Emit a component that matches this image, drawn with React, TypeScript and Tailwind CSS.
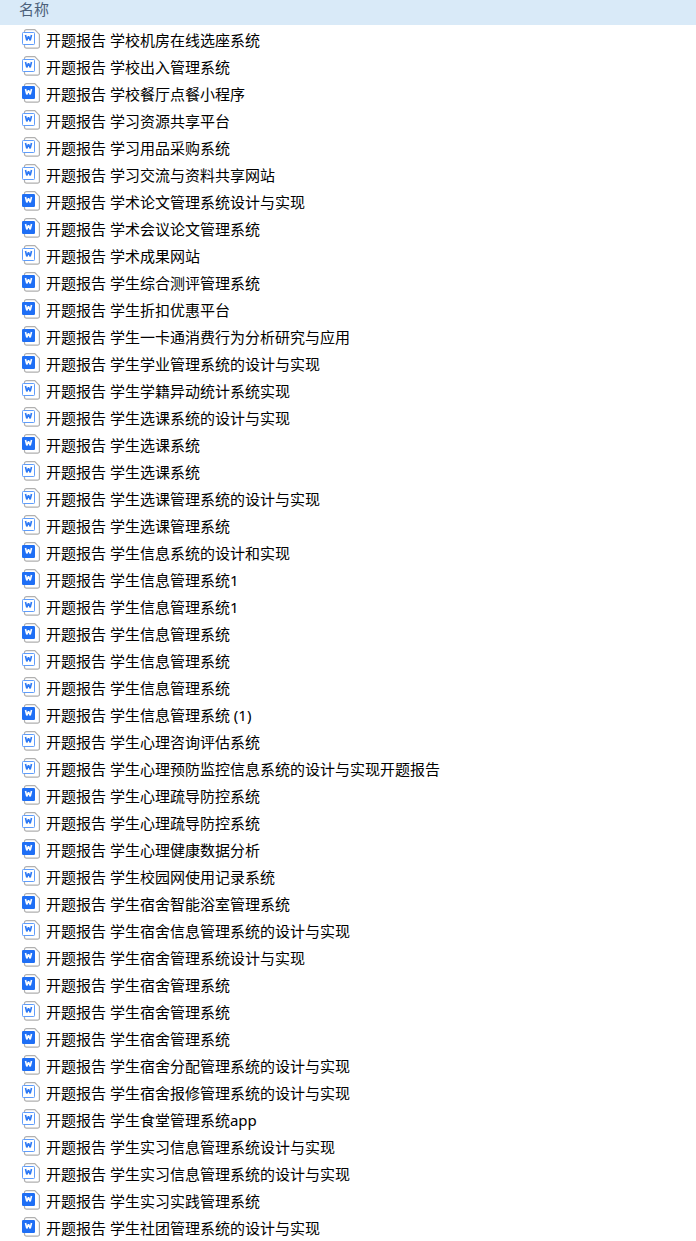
import React from "react";

type DocKind = "doc" | "docx";

type FileItem = {
  name: string;
  kind: DocKind;
};

const files: FileItem[] = [
  { name: "开题报告 学校机房在线选座系统", kind: "doc" },
  { name: "开题报告 学校出入管理系统", kind: "doc" },
  { name: "开题报告 学校餐厅点餐小程序", kind: "docx" },
  { name: "开题报告 学习资源共享平台", kind: "doc" },
  { name: "开题报告 学习用品采购系统", kind: "doc" },
  { name: "开题报告 学习交流与资料共享网站", kind: "doc" },
  { name: "开题报告 学术论文管理系统设计与实现", kind: "docx" },
  { name: "开题报告 学术会议论文管理系统", kind: "docx" },
  { name: "开题报告 学术成果网站", kind: "doc" },
  { name: "开题报告 学生综合测评管理系统", kind: "docx" },
  { name: "开题报告 学生折扣优惠平台", kind: "docx" },
  { name: "开题报告 学生一卡通消费行为分析研究与应用", kind: "docx" },
  { name: "开题报告 学生学业管理系统的设计与实现", kind: "docx" },
  { name: "开题报告 学生学籍异动统计系统实现", kind: "doc" },
  { name: "开题报告 学生选课系统的设计与实现", kind: "doc" },
  { name: "开题报告 学生选课系统", kind: "docx" },
  { name: "开题报告 学生选课系统", kind: "doc" },
  { name: "开题报告 学生选课管理系统的设计与实现", kind: "doc" },
  { name: "开题报告 学生选课管理系统", kind: "doc" },
  { name: "开题报告 学生信息系统的设计和实现", kind: "docx" },
  { name: "开题报告 学生信息管理系统1", kind: "docx" },
  { name: "开题报告 学生信息管理系统1", kind: "doc" },
  { name: "开题报告 学生信息管理系统", kind: "docx" },
  { name: "开题报告 学生信息管理系统", kind: "doc" },
  { name: "开题报告 学生信息管理系统", kind: "doc" },
  { name: "开题报告 学生信息管理系统 (1)", kind: "docx" },
  { name: "开题报告 学生心理咨询评估系统", kind: "doc" },
  { name: "开题报告 学生心理预防监控信息系统的设计与实现开题报告", kind: "doc" },
  { name: "开题报告 学生心理疏导防控系统", kind: "docx" },
  { name: "开题报告 学生心理疏导防控系统", kind: "doc" },
  { name: "开题报告 学生心理健康数据分析", kind: "docx" },
  { name: "开题报告 学生校园网使用记录系统", kind: "doc" },
  { name: "开题报告 学生宿舍智能浴室管理系统", kind: "docx" },
  { name: "开题报告 学生宿舍信息管理系统的设计与实现", kind: "doc" },
  { name: "开题报告 学生宿舍管理系统设计与实现", kind: "docx" },
  { name: "开题报告 学生宿舍管理系统", kind: "docx" },
  { name: "开题报告 学生宿舍管理系统", kind: "doc" },
  { name: "开题报告 学生宿舍管理系统", kind: "docx" },
  { name: "开题报告 学生宿舍分配管理系统的设计与实现", kind: "docx" },
  { name: "开题报告 学生宿舍报修管理系统的设计与实现", kind: "doc" },
  { name: "开题报告 学生食堂管理系统app", kind: "doc" },
  { name: "开题报告 学生实习信息管理系统设计与实现", kind: "doc" },
  { name: "开题报告 学生实习信息管理系统的设计与实现", kind: "doc" },
  { name: "开题报告 学生实习实践管理系统", kind: "docx" },
  { name: "开题报告 学生社团管理系统的设计与实现", kind: "docx" },
];

const DocIcon: React.FC<{ kind: DocKind }> = ({ kind }) => {
  const filled = kind === "docx";

  return (
    <svg
      viewBox="0 0 18 20"
      className="w-[18px] h-5 mt-0.5 shrink-0"
      fill="none"
      aria-hidden="true"
    >
      {/* Sheet with the cut corner */}
      <path
        d="M4.5 0.6H12.8L17.4 5.4V17.4a1.8 1.8 0 0 1-1.8 1.8H4.5a2 2 0 0 1-2-2V2.6a2 2 0 0 1 2-2z"
        fill="#fff"
        stroke="#b0b0b0"
        strokeWidth="1.2"
      />
      {/* Badge */}
      {filled ? (
        <rect x="0" y="3" width="13" height="13" rx="1.2" fill="#1f6ff5" />
      ) : (
        <rect
          x="0.5"
          y="3.5"
          width="12"
          height="12"
          rx="0.8"
          fill="#fff"
          stroke="#5f9dfb"
        />
      )}
      <path
        d="M3.5 6L4.8 11.4L6.5 7.2L8.2 11.4L9.5 6"
        stroke={filled ? "#fff" : "#2b78f5"}
        strokeWidth="1.6"
        strokeLinejoin="bevel"
      />
    </svg>
  );
};

const App: React.FC = () => {
  return (
    <main className="min-h-screen bg-white text-[15px] text-black font-['Noto_Sans','Noto_Sans_CJK_SC',sans-serif]">
      <header className="h-[25px] pl-[19px] bg-[#d9eaf8] text-[#4c607a] leading-[18px]">
        名称
      </header>
      <ul className="pt-0.5">
        {files.map((file, index) => (
          <li key={index} className="flex h-[27px] pl-[22px] gap-1.5">
            <DocIcon kind={file.kind} />
            <span className="leading-[27px] whitespace-nowrap">
              {file.name}
            </span>
          </li>
        ))}
      </ul>
    </main>
  );
};

export default App;
